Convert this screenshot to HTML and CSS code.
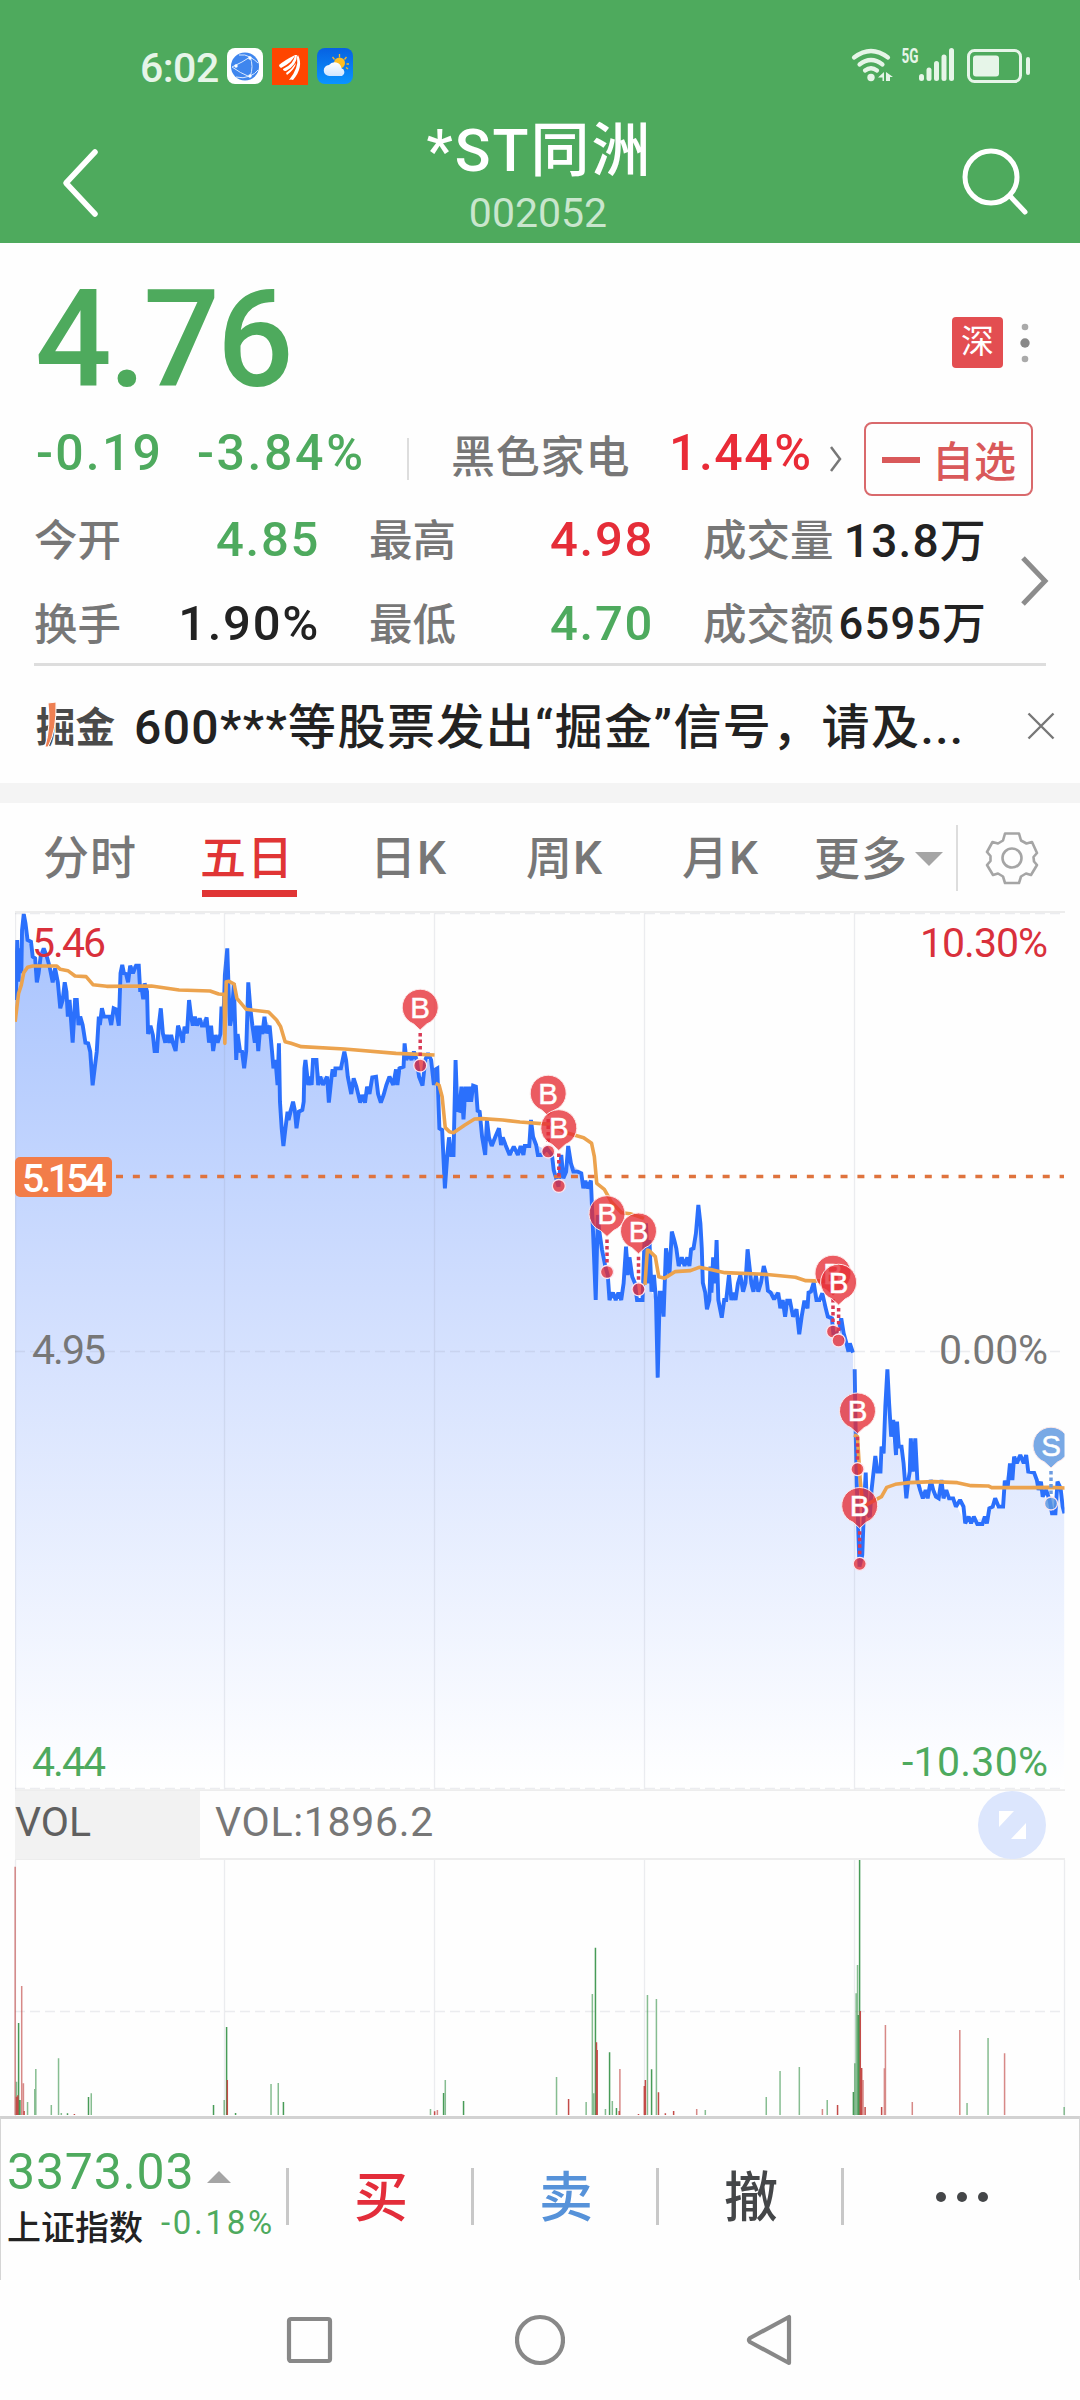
FILE: index.html
```html
<!DOCTYPE html>
<html lang="zh-CN">
<head>
<meta charset="utf-8">
<title>*ST同洲 002052</title>
<link rel="stylesheet" href="styles.css">
</head>
<body>
<header class="top">
  <div class="status">
    <div class="status-left">
      <span class="clock">6:02</span>
      <svg width="36" height="36" viewBox="0 0 36 36"><rect width="36" height="36" rx="8" fill="#fff"/><circle cx="18" cy="18.500" r="14" fill="#3f86ee"/><g fill="none" stroke="#dbe9ff" stroke-width="1"><path d="M5 19Q16 14 23 9M5 19Q13 25 23 29M23 9Q27 18 23 29M12 7Q18 6 23 9M23 9Q28 12 31 15M9 29Q16 31 23 28M23 28Q28 26 31 22"/></g><g fill="#fff"><circle cx="9" cy="18" r="1.700"/><circle cx="23" cy="10" r="1.700"/><circle cx="23" cy="28" r="1.700"/></g></svg>
      <svg width="36" height="37" viewBox="0 0 36 37"><rect width="36" height="37" fill="#ff4500"/><path d="M7 17Q13 12 23 7Q21 14 9 20Q7 19 7 17ZM23 7L25 7Q25 17 14 23Q11 23 11 21Q22 16 23 7ZM26 7Q32 19 21 32Q19 31 17 32Q27 20 25 9ZM24 15Q23 21 15 27L14 25Q20 21 24 15Z" fill="#fff"/></svg>
      <svg width="36" height="36" viewBox="0 0 36 36"><defs><linearGradient id="sky" x2="0" y2="1"><stop stop-color="#0761e2"/><stop offset="1" stop-color="#0a94ff"/></linearGradient><linearGradient id="cloud" x2="0" y2="1"><stop stop-color="#fff"/><stop offset="1" stop-color="#cfe6ff"/></linearGradient></defs><rect width="36" height="36" rx="8" fill="url(#sky)"/><path d="M22.500 6v3.500M15.500 9l2 2.500M29.500 9l-2 2.500M32 16h-2.500M31 21l-2-1.500" stroke="#f7b52a" stroke-width="1.300"/><circle cx="22.500" cy="15" r="5.500" fill="#ffbd20"/><path d="M12.500 28a5.500 5.500 0 0 1-.5-11a7 7 0 0 1 12.500 3.200a4.200 4.200 0 0 1 .5 7.800z" fill="url(#cloud)"/></svg>
    </div>
    <svg class="status-right" width="180" height="56" viewBox="0 -10 180 56">
      <g fill="none" stroke="#e6f5e8" stroke-width="4.200" stroke-linecap="round"><path d="M4 9.500Q21 -3.500 38 9.500M9.500 16.500Q21 7.500 32.500 16.500M15 22.500Q21 18 27 22.500"/></g>
      <g fill="#e6f5e8"><circle cx="21" cy="29.500" r="3.700"/><path d="M34 24v9h-1.500v-3.500H28zM36 24l7 5h-3v4h-4z"/><rect x="69" y="26" width="5" height="7" rx="2.500"/><rect x="76.500" y="19.500" width="5" height="13.500" rx="2.500"/><rect x="84" y="13" width="5" height="20" rx="2.500"/><rect x="91.500" y="6.500" width="5" height="26.500" rx="2.500"/><rect x="99" y="0" width="5" height="33" rx="2.500"/><rect x="123" y="7.500" width="26" height="21" rx="3"/><rect x="176" y="9" width="4" height="18" rx="2"/></g>
      <rect x="118.500" y="2.500" width="52" height="31" rx="6" fill="none" stroke="#e6f5e8" stroke-width="3"/>
      <text class="net" x="51.500" y="15" textLength="17" lengthAdjust="spacingAndGlyphs">5G</text>
    </svg>
  </div>
  <div class="titlebar">
    <svg width="40" height="70" viewBox="0 0 40 70"><path d="M34 4L5 35L34 66" fill="none" stroke="#fff" stroke-width="5.500" stroke-linecap="round" stroke-linejoin="round"/></svg>
    <div class="title"><h1>*ST同洲</h1><p>002052</p></div>
    <svg class="search" width="70" height="72" viewBox="0 0 70 72"><g fill="none" stroke="#fff" stroke-width="5" stroke-linecap="round"><circle cx="32" cy="32" r="26"/><path d="M51 51L66 67"/></g></svg>
  </div>
</header>

<section class="quote">
  <div class="price-row">
    <strong class="price">4.76</strong>
    <div class="badges"><span class="market">深</span><svg width="12" height="42" viewBox="0 0 12 42"><circle cx="6" cy="5" r="3.300" fill="#aaa"/><circle cx="6" cy="21" r="4.700" fill="#888"/><circle cx="6" cy="37" r="3.300" fill="#aaa"/></svg></div>
  </div>
  <div class="change-row">
    <span class="num down chg">-0.19</span>
    <span class="num down pct">-3.84%</span>
    <i class="vline"></i>
    <span class="sector">黑色家电</span>
    <span class="num up spct">1.44%</span>
    <svg width="14" height="28" viewBox="0 0 14 28"><path d="M2 2L11 14L2 26" fill="none" stroke="#777" stroke-width="2.500"/></svg>
    <button class="watch"><i></i>自选</button>
  </div>
  <div class="stats-wrap">
    <div class="stats">
      <span>今开</span><b class="down">4.85</b><span>最高</span><b class="up">4.98</b><span>成交量</span><b class="mix">13.8万</b>
      <span>换手</span><b>1.90%</b><span>最低</span><b class="down">4.70</b><span>成交额</span><b class="mix small">6595万</b>
    </div>
    <svg width="32" height="52" viewBox="0 0 32 52"><path d="M4 3L26 26L4 49" fill="none" stroke="#8c8c8c" stroke-width="5"/></svg>
  </div>
  <div class="notice">
    <svg class="logo" width="84" height="70" viewBox="-2 -11 84 70"><text x="0" y="40" textLength="79" lengthAdjust="spacingAndGlyphs">掘金</text><path d="M12 1L20 0Q21 28 12 45L9 45Q15 24 12 1Z" fill="#ee8053" stroke="#fff"/></svg>
    <p>600***等股票发出“掘金”信号，请及...</p>
    <svg width="28" height="28" viewBox="0 0 28 28"><path d="M1.500 1.500L26.500 26.500M26.500 1.500L1.500 26.500" stroke="#777" stroke-width="2.400"/></svg>
  </div>
</section>

<nav class="tabs">
  <a>分时</a><a class="on">五日</a><a>日K</a><a>周K</a><a>月K</a><a class="more">更多<i></i></a>
  <svg class="gear" width="54" height="54" viewBox="0 0 54 54"><g fill="none" stroke="#a5a5a5" stroke-width="2.600" stroke-linejoin="round"><circle cx="27" cy="27" r="9.500"/><path d="M20 2.500H34L36 9.500L41.500 12.500L47 11L52 22L48.500 26L49 30.500L52 34L46 44L41 42.500L36 45.500L34 52H20L18 45.500L13 42.500L8 44L2 34L5.500 30L5.500 25L2 21L7.500 11L13 12.500L18 9.500Z"/></g></svg>
</nav>

<svg class="chart" width="1080" height="880" viewBox="0 911 1080 880">
  <defs>
    <linearGradient id="fill" gradientUnits="userSpaceOnUse" x1="0" y1="0" x2="0" y2="2670"><stop stop-color="#a6c2fe"/><stop offset=".5" stop-color="#d5e1fe"/><stop offset="1" stop-color="#fff"/></linearGradient>
    <clipPath id="plot"><rect x="15" y="905" width="1049.500" height="886"/></clipPath>
    <g id="pin"><path d="M0 23L-6.500 17A18 18 0 1 1 6.500 17Z" stroke="#fde8e8" stroke-width="1"/><path d="M0 26V52" fill="none" stroke-width="3.500" stroke-dasharray="3.500 3"/><circle cy="58.500" r="6.500" stroke="#fbe5ee" stroke-width="1.300"/></g>
  </defs>
  <g clip-path="url(#plot)">
    <g class="series" transform="translate(0 900) scale(.34435 .33333)">
      <path fill="url(#fill)" d="M44 2670V300L50 120 54 245 57 145 62 220 64 90 69 42 74 70 80 120 90 125 95 170 102 175 107 247 118 170 127 145 136 170 144 200 153 247 160 205 168 247 175 325 182 300 188 247 197 350 202 300 211 428 218 300 228 375 240 375 248 428 262 455 269 556 281 455 287 350 296 325 302 350 318 350 323 375 330 325 345 377 350 220 355 195 372 247 378 197 403 197 407 270 416 298 420 250 427 275 430 402 437 377 449 453 456 453 467 325 473 400 485 405 510 453 517 377 531 428 543 400 549 300 560 377 600 352 607 428 613 377 619 453 640 402 643 325 653 225 660 145 665 300 673 350 679 250 686 480 690 402 709 505 721 247 727 325 750 453 768 350 783 377 794 505 800 480 806 555 810 430 813 605 823 738 835 635 851 605 861 685 868 635 878 630 887 480 895 555 909 480 919 480 930 530 950 530 955 608 966 508 990 505 1000 455 1010 530 1020 582 1027 535 1046 608 1060 608 1081 532 1092 530 1106 608 1131 530 1142 555 1172 500 1175 430 1180 480 1202 455 1227 557 1235 480 1252 480 1260 555 1270 505 1276 685 1284 690 1292 865 1304 712 1317 765 1323 480 1328 630 1340 560 1346 658 1363 560 1382 560 1400 710 1409 765 1414 660 1428 738 1449 685 1455 735 1468 735 1480 765 1537 738 1542 660 1557 735 1605 760 1615 835 1622 860 1630 765 1640 820 1650 738 1658 790 1688 820 1694 865 1716 842 1722 990 1730 1200 1736 945 1758 1100 1770 1200 1804 1200 1818 1040 1828 1072 1850 1200 1866 1200 1876 970 1883 1150 1892 1175 1905 1200 1910 1433 1916 1178 1927 1250 1934 1045 1944 1125 1951 995 1971 1098 1996 1098 2014 1045 2028 915 2038 1045 2053 1228 2063 1100 2076 1150 2081 1020 2086 1200 2096 1253 2117 1125 2130 1200 2150 1125 2165 1148 2171 1048 2182 1150 2202 1175 2218 1098 2230 1172 2260 1178 2273 1200 2313 1250 2321 1303 2345 1178 2363 1148 2380 1200 2398 1225 2416 1255 2434 1300 2443 1255 2458 1330 2477 1358V1408H2482L2496 2000 2504 1965 2514 1718 2526 1850 2542 1668 2557 1715 2566 1660 2577 1408 2588 1610 2602 1665 2605 1565 2624 1690 2632 1795 2645 1615 2658 1615 2664 1740 2680 1795 2703 1740 2726 1795 2734 1740 2748 1795 2768 1795 2803 1870 2866 1850 2873 1825 2913 1820 2918 1742 2945 1670 2963 1665 2986 1715 3003 1718 3028 1790 3048 1800 3065 1840 3071 1745 3091 1840V2670Z"/>
      <path class="line" d="M46 300L50 120 54 245 57 145 62 220 64 90 69 42 74 70 80 120 90 125 95 170 102 175 107 247 112 220 118 170 127 145 136 170 144 200 153 247 160 205 168 247 175 325 182 300 188 247 193 275 197 350 202 300 211 428 218 300 223 300 228 375 233 350 240 375 248 428 256 430 262 455 269 556 275 505 281 455 287 350 290 375 296 325 302 350 318 350 323 375 330 325 337 328 345 377 350 220 355 195 360 220 366 222 372 247 378 197 386 220 395 197 403 197 407 270 412 270 416 298 420 250 427 275 430 402 437 377 444 405 449 453 456 453 461 377 467 325 473 400 480 428 485 405 492 428 497 405 502 428 510 453 517 377 524 400 531 428 536 380 543 400 549 300 555 350 560 377 566 350 572 377 580 355 586 377 593 377 600 352 607 428 613 377 619 453 626 405 632 428 640 402 643 325 650 325 653 225 660 145 665 300 668 377 673 350 679 250 686 480 690 402 697 453 703 455 709 505 715 453 721 247 727 325 733 377 740 428 745 377 750 453 756 377 762 402 768 350 774 400 783 377 790 455 794 505 800 480 806 555 810 430 813 605 818 685 823 738 829 685 835 635 838 660 845 630 851 605 856 630 861 685 868 635 878 630 882 605 884 505 887 480 895 555 900 530 905 555 909 480 919 480 924 555 930 530 938 555 950 530 955 608 963 530 966 508 972 530 974 505 990 505 1000 455 1005 480 1010 530 1020 582 1027 535 1035 560 1046 608 1052 585 1060 608 1066 560 1073 582 1081 532 1092 530 1098 582 1106 608 1114 585 1122 555 1131 530 1142 555 1150 508 1154 555 1160 505 1172 500 1175 430 1180 480 1188 460 1195 480 1202 455 1210 480 1217 530 1227 557 1235 480 1243 460 1252 480 1260 555 1265 508 1270 505 1276 685 1284 690 1292 865 1299 765 1304 712 1310 765 1317 765 1323 480 1328 630 1334 632 1340 560 1346 658 1352 560 1357 605 1363 560 1368 605 1374 557 1382 560 1387 632 1393 635 1400 710 1409 765 1414 660 1420 712 1428 738 1438 712 1449 685 1455 735 1460 712 1468 735 1480 765 1492 740 1504 765 1512 738 1520 765 1524 738 1537 738 1542 660 1548 710 1557 735 1562 765 1572 765 1588 745 1603 765 1608 810 1615 835 1622 860 1630 765 1636 835 1644 815 1650 738 1658 790 1665 815 1678 815 1688 820 1694 865 1700 842 1706 865 1716 842 1722 990 1730 1200 1736 945 1740 990 1748 1048 1758 1100 1765 1125 1770 1200 1780 1178 1788 1200 1796 1178 1804 1200 1811 1150 1818 1040 1823 1125 1828 1072 1836 1130 1844 1150 1850 1200 1866 1200 1871 1040 1876 970 1883 1150 1886 1020 1892 1175 1899 1125 1905 1200 1910 1433 1916 1178 1921 1178 1927 1250 1934 1045 1938 1070 1944 1125 1951 995 1958 1020 1964 1045 1971 1098 1980 1072 1988 1098 1996 1072 2002 1098 2007 1048 2014 1045 2021 1000 2028 915 2034 970 2038 1045 2041 1148 2048 1178 2053 1228 2060 1200 2063 1100 2066 1178 2071 1072 2076 1150 2081 1020 2086 1200 2096 1253 2103 1200 2109 1200 2117 1125 2124 1200 2130 1178 2136 1200 2143 1150 2150 1125 2158 1175 2165 1148 2171 1048 2176 1095 2182 1150 2188 1175 2195 1125 2202 1175 2210 1148 2218 1098 2225 1125 2230 1172 2238 1178 2248 1198 2260 1178 2266 1225 2273 1200 2280 1250 2286 1202 2294 1202 2303 1250 2313 1228 2321 1303 2328 1250 2336 1202 2345 1225 2348 1178 2355 1175 2363 1148 2371 1200 2380 1200 2388 1180 2398 1225 2404 1250 2416 1255 2420 1300 2434 1300 2443 1255 2450 1300 2458 1330 2464 1355 2468 1330 2477 1358M2482 1408L2485 1600 2488 1750 2496 2000 2504 1965 2510 1800 2514 1718 2518 1840 2526 1850 2531 1770 2542 1668 2548 1715 2557 1715 2560 1640 2566 1660 2571 1520 2577 1408 2582 1510 2588 1610 2594 1560 2598 1610 2602 1665 2605 1565 2610 1640 2618 1640 2624 1690 2632 1795 2638 1740 2642 1715 2645 1615 2651 1715 2658 1615 2664 1740 2672 1770 2680 1795 2688 1770 2694 1795 2703 1740 2710 1770 2718 1790 2726 1795 2734 1740 2740 1795 2748 1770 2756 1795 2768 1795 2776 1820 2788 1800 2798 1820 2803 1870 2813 1850 2820 1870 2828 1850 2838 1872 2853 1872 2860 1850 2866 1870 2873 1825 2883 1820 2890 1795 2900 1820 2913 1820 2918 1742 2926 1765 2933 1690 2940 1740 2945 1670 2953 1690 2963 1665 2973 1690 2980 1665 2986 1715 3003 1718 3011 1740 3016 1770 3023 1745 3028 1790 3038 1770 3048 1800 3055 1840 3065 1840 3071 1745 3080 1765 3086 1820 3091 1840"/>
    </g>
    <path class="grid" d="M15.500 913V1790M224.500 913V1790M434.500 913V1790M644.500 913V1790M854.500 913V1790"/>
    <path class="grid dash" d="M15 913.500H1064M15 1351.500H1064M15 1788.500H1064"/>
    <path d="M116 1176.500H1064" fill="none" stroke="#df733d" stroke-width="3.500" stroke-dasharray="7 9.850"/>
    <g class="series" transform="translate(0 900) scale(.34435 .33333)">
      <path class="avg" d="M44 365L54 280 62 255 69 218 80 202 95 198 165 198 175 208 197 212 218 228 250 230 270 254 310 259 440 258 520 270 610 273 635 282 651 283L653 430 657 245 665 244 680 252 688 295 715 328 780 336 803 360 815 380 828 425 845 430 875 440 1000 447 1150 460 1262 465M1265 550L1275 555 1284 590 1293 683 1305 695 1317 698 1350 675 1378 657 1400 656 1460 660 1510 666 1600 673 1650 700 1695 713 1718 730 1726 770 1733 850 1755 868 1775 905 1805 938 1830 941 1870 955M1873 1155L1880 1050 1885 1052 1903 1070 1913 1130 1930 1135 1960 1115 2005 1112 2030 1102 2060 1108 2105 1118 2220 1123 2310 1132 2340 1142 2420 1144M2480 1605L2490 1610 2498 1740 2506 1820 2560 1790 2575 1762 2600 1753 2640 1748 2710 1745 2780 1748 2820 1757 2870 1758 2880 1763 2990 1763 3050 1762 3093 1764"/>
    </g>
    <g class="buy">
      <use href="#pin" x="420.200" y="1007"/><use href="#pin" x="548.200" y="1093"/><use href="#pin" x="607" y="1213.500"/><use href="#pin" x="638.500" y="1230.800"/><use href="#pin" x="833" y="1273"/><use href="#pin" x="857.500" y="1410.700"/><use href="#pin" x="859.700" y="1505.300"/>
    </g>
    <g class="letter"><text x="420.200" y="1017.500">B</text><text x="548.200" y="1103.500">B</text><text x="607" y="1224">B</text><text x="638.500" y="1241.500">B</text><text x="833" y="1283.500">B</text><text x="857.500" y="1421">B</text><text x="859.700" y="1516">B</text></g>
    <g class="buy"><use href="#pin" x="558.800" y="1127.500"/><use href="#pin" x="838.600" y="1282"/></g>
    <use class="sell" href="#pin" x="1051" y="1445"/>
    <g class="letter"><text x="558.800" y="1138">B</text><text x="838.600" y="1292.500">B</text><text x="1051" y="1455.500">S</text></g>
  </g>
  <path d="M15 912H1065M15 1790.300H1065" stroke="#ededed" stroke-width="2"/>
  <rect x="15" y="1157" width="97" height="40" rx="5" fill="#f27d49"/>
  <text class="avgtag" x="22" y="1192" textLength="85">5.154</text>
  <g class="axis"><text class="up" x="32" y="957" textLength="74">5.46</text><text x="32" y="1363.500" textLength="74">4.95</text><text class="down" x="32" y="1776" textLength="74">4.44</text><text class="up" x="920" y="957" textLength="128">10.30%</text><text x="939" y="1363.500" textLength="109">0.00%</text><text class="down" x="902" y="1776" textLength="146">-10.30%</text></g>
</svg>

<div class="vol-head"><span class="vol-name">VOL</span><span class="vol-value">VOL:1896.2</span>
  <svg width="68" height="68" viewBox="0 0 68 68"><circle cx="34" cy="34" r="34" fill="#dce6fd"/><path d="M21 20H36L21 36ZM48 32V48H33Z" fill="#fff"/></svg>
</div>
<svg class="volume" width="1080" height="256" viewBox="0 1860 1080 256">
  <path class="grid" d="M15.500 1860V2116M224.500 1860V2116M434.500 1860V2116M644.500 1860V2116M854.500 1860V2116M1064.500 1860V2116"/>
  <path class="grid dash" d="M15 2011.500H1064"/>
  <g class="bars" transform="translate(0 1700) scale(.68878 .33333)">
    <path class="r light" d="M22 500V1245M31.500 858V1245M34 1150V1245M900 1107V1245M635 1230V1245M1285.500 975V1245M1284 1105V1245M1393.500 990V1245M1458.500 1060V1245M1324.500 1206V1245M1011.500 1227V1245M1253 1140V1245M1194 1227V1245"/>
    <path class="g light" d="M24 1145V1245M40 1206V1245M52 1107V1245M50.500 1167V1245M74.500 1215V1245M85 1075V1245M132.500 1180V1245M89 1239V1245M325.500 1200V1245M393.500 1152V1245M404 1149V1245M646.500 1140V1245M625 1227V1245M808 1131V1245M860 882V1245M851 1206V1245M862 1180V1245M889 1203V1245M879 1227V1245M940 885V1245M953 897V1245M1024 1230V1245M1112.500 1191V1245M1132.500 1113V1245M1160.500 1101V1245M1201 1200V1245M1243 880V1245M1245 795V1245M1241 1090V1245M1404 1209V1245M1434.500 1014V1245M1545 1221V1245"/>
    <path class="g" d="M27 969V1245M29 1200V1245M128.500 1191V1245M329 981V1245M310 1215V1245M411.500 1206V1245M342 1239V1245M644 1179V1245M673 1203V1245M864.500 743V1245M885 1057V1245M895 1224V1245M946 1108V1245M1248 480V1245M1246 945V1245M1239 1176V1245M98 1240V1245"/>
    <path class="r" d="M24 1190V1245M26 1186V1245M35 1233V1245M108 1242V1245M330 1140V1245M631 1234V1245M825.500 1197V1245M866 1027V1245M867 1050V1245M899 1233V1245M937 1140V1245M935.500 1158V1245M956 1177V1245M978 1233V1245M966 1240V1245M927 1242V1245M1216 1215V1245M1249 933V1245M1251 1104V1245M1256 1221V1245M1280 1221V1245"/>
  </g>
</svg>

<footer class="trade">
  <div class="index"><div class="idx-top"><span>3373.03</span><i></i></div><div class="idx-bot"><b>上证指数</b><span>-0.18%</span></div></div>
  <a class="buy-btn">买</a><a class="sell-btn">卖</a><a class="cancel-btn">撤</a>
  <a class="dots"><i></i><i></i><i></i></a>
</footer>
<div class="sysnav">
  <svg width="48" height="48" viewBox="0 0 48 48"><rect x="3" y="3" width="41" height="42" rx="2"/></svg>
  <svg width="50" height="52" viewBox="0 0 50 52"><circle cx="25" cy="26" r="23"/></svg>
  <svg width="48" height="52" viewBox="0 0 48 52"><path d="M43 3V49L4 28Q2 26 4 24Z"/></svg>
</div>
</body>
</html>
```
FILE: styles.css
```css
* { box-sizing: border-box; margin: 0; padding: 0; }
body { width: 1080px; height: 2400px; overflow: hidden; background: #fefefe; font-family: Roboto, "Noto Sans CJK SC", sans-serif; display: flex; flex-direction: column; color: #222; }
svg { display: block; flex: none; }
i { font-style: normal; }
.up { color: #e52d38; fill: #d9303b; }
.down { color: #4eaa5e; fill: #4eaa5e; }

.top { height: 243px; background: #4eaa5d; color: #fff; display: flex; flex-direction: column; }
.status { height: 115px; padding: 17px 50px 0 140px; display: flex; justify-content: space-between; align-items: center; }
.status-left { display: flex; align-items: center; gap: 9px; }
.clock { width: 78px; font-size: 41px; line-height: 44px; color: #e6f5e8; padding-top: 4px; font-weight: 500; letter-spacing: -.5px; }
.status-right { margin-top: -1px; }
.net { font: 700 20px Roboto, sans-serif; fill: #e6f5e8; }
.titlebar { height: 128px; padding: 8px 51px 0 61px; display: flex; justify-content: space-between; align-items: center; }
.title { text-align: center; padding-left: 19px; margin-top: -9px; }
.title h1 { font-size: 59px; line-height: 68px; font-weight: 500; letter-spacing: 2px; }
.title p { font-size: 41px; line-height: 54px; color: #c9e6cd; margin-top: 1px; padding-right: 3px; }
.search { margin-top: -5px; }

.quote { height: 540px; display: flex; flex-direction: column; }
.price-row { height: 176px; padding: 17px 49px 0 35px; display: flex; justify-content: space-between; align-items: center; }
.price { font-size: 135px; line-height: 150px; font-weight: 500; color: #4eaa5d; letter-spacing: -3px; }
.badges { display: flex; align-items: center; gap: 16px; margin-top: 6px; }
.market { width: 51px; height: 51px; border-radius: 4px; background: #e34e51; color: #fff; font-size: 33px; line-height: 50px; text-align: center; }
.change-row { height: 79px; padding-left: 36px; display: flex; align-items: center; }
.num { font-size: 50px; line-height: 60px; margin-top: -12px; white-space: nowrap; font-weight: 500; }
.chg { width: 161px; letter-spacing: 2.200px; }
.pct { width: 210px; letter-spacing: 2.600px; }
.vline { width: 2px; height: 42px; background: #ddd; margin-right: 42px; }
.sector { width: 219px; font-size: 44px; line-height: 60px; color: #777; letter-spacing: .8px; font-weight: 500; margin-top: -2px; }
.spct { width: 160px; letter-spacing: 1.500px; color: #e92b37; margin-left: -1px; }
.watch { margin-left: 21px; width: 169px; height: 74px; border: 2px solid #d9696c; border-radius: 8px; background: none; color: #d9595a; font: 500 42px/60px "Noto Sans CJK SC", sans-serif; display: flex; align-items: center; padding: 0 0 0 16px; gap: 12px; white-space: nowrap; }
.watch i { width: 38px; height: 6px; background: #d9595a; margin-top: 3px; }
.stats-wrap { height: 168px; margin: 0 34px; border-bottom: 3px solid #ddd; display: flex; align-items: center; justify-content: space-between; }
.stats-wrap svg { margin-right: -5px; }
.stats { width: 953px; height: 168px; display: grid; grid-template-columns: 88px 198px 137px 197px 133px 1fr; grid-template-rows: 84px 84px; align-items: center; white-space: nowrap; }
.stats span { font-size: 43.500px; color: #777; line-height: 60px; margin-top: 6px; font-weight: 500; }
.stats span:nth-child(6n+3), .stats span:nth-child(6n+5) { padding-left: 49px; }
.stats b { font-size: 49px; line-height: 60px; font-weight: 500; text-align: right; letter-spacing: 1.700px; margin-top: 2px; }
.stats .mix { font-size: 46px; letter-spacing: 1.200px; margin-top: 4px; }
.stats .small { font-size: 43.500px; }
.notice { height: 117px; padding: 2px 25px 0 34px; display: flex; align-items: center; }
.logo text { font: 700 41px "Noto Sans CJK SC", sans-serif; fill: #4a4a4a; }
.notice p { flex: 1; margin-left: 16px; font-size: 48px; line-height: 60px; white-space: nowrap; letter-spacing: 1.400px; margin-top: 4px; font-weight: 500; }

.tabs { height: 128px; border-top: 20px solid #f4f4f4; display: flex; align-items: center; padding: 2px 0 0 43px; color: #777; font-size: 46px; line-height: 60px; white-space: nowrap; font-weight: 500; }
.tabs a { width: 157px; height: 62px; letter-spacing: 1px; padding-top: 1px; }
.tabs a:nth-child(3) { margin-left: 11px; }
.tabs a:nth-child(3), .tabs a:nth-child(4), .tabs a:nth-child(5) { width: 156px; }
.tabs .on { width: 159px; color: #e03535; }
.tabs .on::after { content: ""; display: block; width: 95px; height: 7px; background: #e03535; margin: 2px 0 0 2px; }
.tabs .more { width: 144px; height: 66px; border-right: 2px solid #ddd; margin-left: -24px; display: flex; align-items: center; gap: 7px; }
.more i { border: 14px solid transparent; border-top-color: #a5a5a5; border-bottom: 0; }
.gear { margin-left: 27px; }

.chart, .volume { overflow: hidden; }
.line, .avg { fill: none; vector-effect: non-scaling-stroke; stroke-linejoin: miter; stroke-miterlimit: 2; }
.line { stroke: #2b70fc; stroke-width: 3.900px; }
.avg { stroke: #eca34e; stroke-width: 3.600px; stroke-linejoin: round; }
.grid { fill: none; stroke: #8a92a0; stroke-opacity: .16; stroke-width: 1.300px; }
.dash { stroke-dasharray: 10 5; }
.buy { fill: #e62d35; fill-opacity: .78; stroke: #d83a55; }
.sell { fill: #5b96df; fill-opacity: .82; stroke: #6c9be0; }
.letter { font: 500 29.500px "Liberation Sans", sans-serif; fill: #fff; stroke: #fff; stroke-width: .5px; text-anchor: middle; }
.axis { font-size: 41px; fill: #777; stroke-width: 0; }
.avgtag { font-size: 39px; font-weight: 500; fill: #fff; }

.vol-head { height: 69px; border-bottom: 2px solid #ededed; margin: 0 15px; display: flex; align-items: center; font-size: 41px; line-height: 62px; }
.vol-name { width: 185px; height: 68px; background: #f2f2f2; color: #606060; }
.vol-value { flex: 1; padding-left: 15px; color: #777; letter-spacing: .7px; height: 68px; }
.vol-head svg { margin-right: 19px; }
.bars path { fill: none; stroke-width: 1.500px; vector-effect: non-scaling-stroke; }
.g { stroke: #479b57; }
.r { stroke: #c34b48; }
.bars .light { opacity: .65; }

.trade { height: 164px; border: 1px solid #d5d5d5; border-top: 3px solid #d2d2d2; border-bottom: 0; display: flex; padding-top: 23px; }
.index { width: 285px; padding-left: 6px; white-space: nowrap; }
.idx-top { height: 60px; display: flex; align-items: center; gap: 13px; color: #4eaa5e; font-size: 50px; letter-spacing: .8px; }
.idx-top i { border: 12px solid transparent; border-bottom-color: #a5a5a5; border-top: 0; margin-top: 9px; }
.idx-bot { display: flex; align-items: center; height: 44px; font-size: 34px; gap: 18px; }
.idx-bot b { font-weight: 500; margin-top: 2px; }
.idx-bot span { color: #4eaa5e; font-size: 33px; letter-spacing: 2.700px; margin-top: -3px; }
.trade a { width: 185px; height: 57px; margin-top: 26px; border-left: 3px solid #c8c8c8; text-align: center; font-size: 54px; line-height: 62px; font-weight: 500; padding-left: 2px; }
.trade .buy-btn { color: #e32d3a; }
.trade .sell-btn { color: #5692d9; }
.trade .cancel-btn { color: #444648; }
.trade .dots { width: 237px; display: flex; align-items: center; justify-content: center; gap: 11px; }
.dots i { width: 10px; height: 10px; border-radius: 50%; background: #444648; }
.sysnav { height: 120px; padding-left: 286px; display: flex; align-items: center; gap: 181px; }
.sysnav svg { fill: none; stroke: #888; stroke-width: 4.200px; stroke-linejoin: round; }
```
